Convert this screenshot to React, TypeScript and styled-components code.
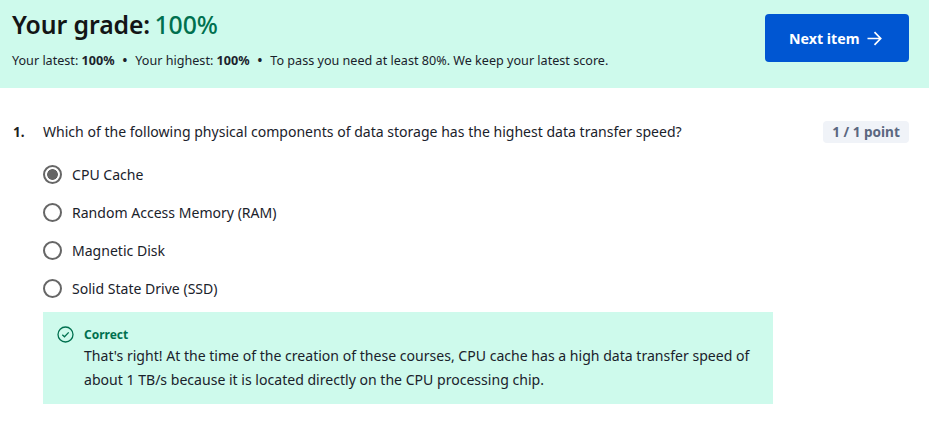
import React from "react";
import styled, { createGlobalStyle } from "styled-components";

const Global = createGlobalStyle`
  html, body { margin: 0; padding: 0; background: #fff; }
  body { font-family: "Noto Sans", "Lato", sans-serif; color: #1f1f1f; }
`;
const Page = styled.div`width: 929px; height: 423px; overflow: hidden; background: #fff;`;
const Banner = styled.header`
  height: 88px; box-sizing: border-box; background: #cefaec;
  display: flex; justify-content: space-between; align-items: flex-start;
  padding: 14px 20px 0 12px;
`;
const GradeColumn = styled.div`display: flex; flex-direction: column; margin-top: -5px;`;
const Title = styled.h1`
  margin: 0; font-size: 24.8px; line-height: 30px; font-weight: 600; color: #131516; letter-spacing: -0.1px;
`;
const GradeValue = styled.span`font-weight: 500; color: #00704f; margin-left: -2px;`;
const Summary = styled.p`
  margin: 13px 0 0; font-size: 12.6px; line-height: 18px; color: #1a222b; display: flex; gap: 8px;
`;
const Strong = styled.b`font-weight: 700;`;
const NextButton = styled.button`
  width: 144px; height: 48px; border: 0; border-radius: 4px; background: #0056d2; color: #fff;
  font: 700 14.2px "Noto Sans", sans-serif; display: flex; align-items: center; justify-content: flex-start; gap: 8px; padding: 0 0 0 24px;
`;
const Body = styled.main`padding: 33px 20px 0 13px;`;
const QuestionRow = styled.div`display: flex; align-items: flex-start; line-height: 22px;`;
const QNumber = styled.span`width: 30px; font-size: 13.5px; font-weight: 700;`;
const QText = styled.span`flex: 1; font-size: 14.05px; color: #1a222b;`;
const Points = styled.span`
  width: 86px; height: 22px; border-radius: 4px; background: #f0f3f8; color: #5b6780;
  font-size: 13.6px; font-weight: 700; text-align: center;
`;
const Options = styled.div`display: flex; flex-direction: column; gap: 16px; margin: 20px 0 0 30px;`;
const Option = styled.div`display: flex; align-items: center; gap: 10px; height: 22px; font-size: 14.05px; color: #1a222b;`;
const Radio = styled.span<{ $on?: boolean }>`
  width: 19px; height: 19px; box-sizing: border-box; border: 2px solid #666; border-radius: 50%;
  background: ${(p) => (p.$on ? "radial-gradient(circle, #666 0 5px, #fff 5.7px)" : "#fff")};
`;
const Feedback = styled.section`
  width: 730px; height: 92px; box-sizing: border-box; margin: 13px 0 0 30px; background: #cefaec;
  padding: 14px 20px 0 14px; display: flex; gap: 10px;
`;
const FeedbackContent = styled.div`display: flex; flex-direction: column; padding-top: 1px;`;
const CorrectLabel = styled.div`font-size: 12px; font-weight: 700; line-height: 16px; margin-bottom: 1px; color: #00704f;`;
const FeedbackText = styled.p`margin: 0; font-size: 14.07px; line-height: 24px; color: #1a222b; white-space: nowrap;`;
const Icon = styled.svg`flex: none;`;

export default function App() {
  return (
    <Page>
      <Global />
      <Banner>
        <GradeColumn>
          <Title>Your grade: <GradeValue>100%</GradeValue></Title>
          <Summary>
            <span>Your latest: <Strong>100%</Strong></span><Strong>•</Strong>
            <span>Your highest: <Strong>100%</Strong></span><Strong>•</Strong>
            <span>To pass you need at least 80%. We keep your latest score.</span>
          </Summary>
        </GradeColumn>
        <NextButton>
          Next item
          <svg width="15" height="15" viewBox="0 0 15 15" fill="none" stroke="#fff" strokeWidth="1.7">
            <path d="M0.5 7.5h13M7.5 1.2l6.2 6.3-6.2 6.3" />
          </svg>
        </NextButton>
      </Banner>
      <Body>
        <QuestionRow>
          <QNumber>1.</QNumber>
          <QText>Which of the following physical components of data storage has the highest data transfer speed?</QText>
          <Points>1 / 1 point</Points>
        </QuestionRow>
        <Options>
          <Option><Radio $on />CPU Cache</Option>
          <Option><Radio />Random Access Memory (RAM)</Option>
          <Option><Radio />Magnetic Disk</Option>
          <Option><Radio />Solid State Drive (SSD)</Option>
        </Options>
        <Feedback>
          <Icon width="17" height="17" viewBox="0 0 17 17" fill="none" stroke="#00704f" strokeWidth="1.3">
            <circle cx="8.5" cy="8.5" r="7.5" />
            <path d="M5.3 8.7l2.2 2.1 4.2-4.4" />
          </Icon>
          <FeedbackContent>
            <CorrectLabel>Correct</CorrectLabel>
            <FeedbackText>That's right! At the time of the creation of these courses, CPU cache has a high data transfer speed of<br />about 1 TB/s because it is located directly on the CPU processing chip.</FeedbackText>
          </FeedbackContent>
        </Feedback>
      </Body>
    </Page>
  );
}
